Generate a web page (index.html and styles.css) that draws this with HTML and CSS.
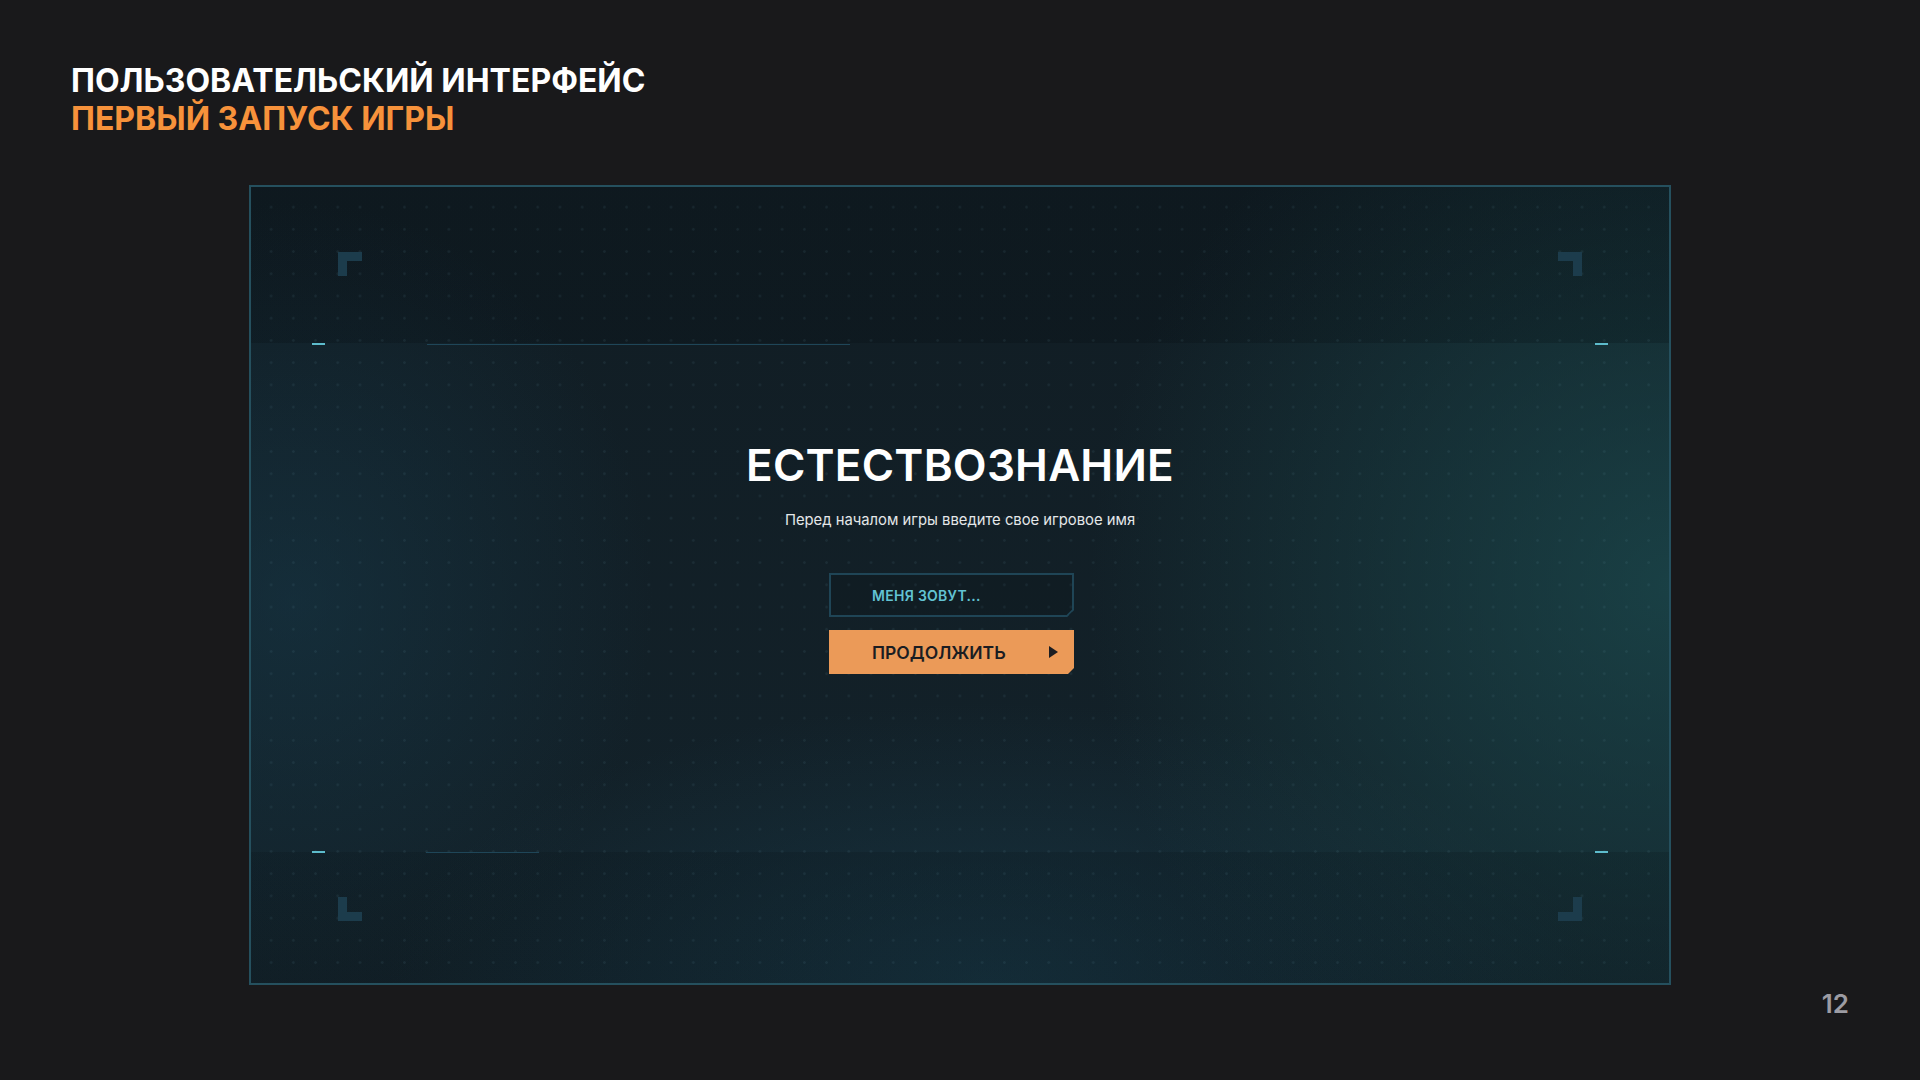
FILE: index.html
```html
<!DOCTYPE html>
<html lang="ru">
    <head>
        <meta charset="utf-8" />
        <title>Пользовательский интерфейс — первый запуск игры</title>
        <link rel="stylesheet" href="styles.css">
    </head>
    <body>
        <header class="deckTitle">
            <div class="deckTitle-main">Пользовательский интерфейс</div>
            <div class="deckTitle-sub">Первый запуск игры</div>
        </header>

        <main class="screen">
            <!-- corner brackets -->
            <span class="bracket tl"></span>
            <span class="bracket tr"></span>
            <span class="bracket bl"></span>
            <span class="bracket br"></span>

            <!-- guide dashes and lines -->
            <span class="dash top left"></span>
            <span class="dash top right"></span>
            <span class="dash bottom left"></span>
            <span class="dash bottom right"></span>
            <span class="guide top"></span>
            <span class="guide bottom"></span>

            <div class="welcome">
                <h1 class="welcome-title">Естествознание</h1>
                <p class="welcome-text">Перед началом игры введите свое игровое имя</p>

                <form class="login">
                    <label class="nameField">
                        <input type="text" class="nameInput" placeholder="Меня зовут..." />
                    </label>
                    <button type="submit" class="continue">
                        <span>Продолжить</span>
                        <svg class="continue-arrow" width="9" height="12" viewBox="0 0 9 12"><path d="M0 0 L9 6 L0 12 Z" fill="#1b1d22"/></svg>
                    </button>
                </form>
            </div>
        </main>

        <footer class="pageNum">12</footer>
    </body>
</html>
```

FILE: styles.css
```css
html, body {
    margin:             0;
    padding:            0;
}

body {
    background:         #19191b;
    color:              #ffffff;
    font-family:        Inter, "Noto Sans", sans-serif;
    width:              1920px;
    height:             1080px;
    overflow:           hidden;
}

/* Slide heading */
.deckTitle {
    padding:            62px 71px 0;
    font-size:          32px;
    font-weight:        700;
    line-height:        38px;
    text-transform:     uppercase;
}

.deckTitle-main {
    color:              #ffffff;
}

.deckTitle-sub {
    color:              #f7923b;
}

/* The game screen mock */
.screen {
    position:           relative;
    box-sizing:         border-box;
    width:              1422px;
    height:             800px;
    margin:             47px 0 0 249px;
    border:             2px solid #25505e;
    background:
        radial-gradient(circle at center, rgba(120, 175, 195, 0.09) 0, rgba(120, 175, 195, 0.09) 1px, transparent 1.6px) 0 0 / 22.22px 22.22px,
        linear-gradient(to bottom, rgba(4, 10, 14, 0.22) 0, rgba(4, 10, 14, 0.22) 156px, transparent 156px, transparent 665px, rgba(4, 10, 14, 0.16) 665px),
        radial-gradient(ellipse 580px 580px at 100% 50%, rgba(28, 76, 80, 0.72), transparent 100%),
        radial-gradient(ellipse 600px 280px at 52% 100%, rgba(26, 66, 84, 0.5), transparent 100%),
        radial-gradient(ellipse 360px 400px at 3% 52%, rgba(24, 62, 80, 0.45), transparent 100%),
        linear-gradient(to bottom, #111d24, #13222a);
    background-position: 9px 9px, 0 0, 0 0, 0 0, 0 0, 0 0;
    background-repeat:  repeat, no-repeat, no-repeat, no-repeat, no-repeat, no-repeat;
}

.bracket {
    position:           absolute;
    width:              24px;
    height:             24px;
    border:             0 solid #1c3c4c;
    box-sizing:         border-box;
}

.bracket.tl { left: 87px;  top: 65px;    border-width: 9px 0 0 9px; }
.bracket.tr { right: 87px; top: 65px;    border-width: 9px 9px 0 0; }
.bracket.bl { left: 87px;  bottom: 62px; border-width: 0 0 9px 9px; }
.bracket.br { right: 87px; bottom: 62px; border-width: 0 9px 9px 0; }

.dash {
    position:           absolute;
    width:              13px;
    height:             2px;
    background:         #5dbccc;
}

.dash.top    { top: 156px; }
.dash.bottom { top: 664px; }
.dash.left   { left: 61px; }
.dash.right  { right: 61px; }

.guide {
    position:           absolute;
    height:             1px;
    background:         #1f4658;
}

.guide.top {
    left:               176px;
    top:                157px;
    width:              423px;
}

.guide.bottom {
    left:               175px;
    top:                665px;
    width:              113px;
}

/* Centered welcome block */
.welcome {
    display:            flex;
    flex-direction:     column;
    align-items:        center;
    padding-top:        252px;
}

.welcome-title {
    margin:             0;
    font-size:          44px;
    font-weight:        600;
    line-height:        53px;
    letter-spacing:     0.005em;
    text-transform:     uppercase;
    color:              #ffffff;
}

.welcome-text {
    margin:             18px 0 0;
    font-size:          14.8px;
    line-height:        20px;
    color:              #e4e7e9;
}

.login {
    display:            flex;
    flex-direction:     column;
    gap:                13px;
    width:              245px;
    margin:             43px 17px 0 0;
}

.nameField {
    position:           relative;
    display:            block;
    box-sizing:         border-box;
    height:             44px;
    border:             2px solid #1f4556;
    background:         rgba(0, 0, 0, 0.08);
    clip-path:          polygon(0 0, 100% 0, 100% calc(100% - 7px), calc(100% - 7px) 100%, 0 100%);
}

.nameField::after {
    content:            "";
    position:           absolute;
    right:              -4px;
    bottom:             1px;
    width:              12px;
    height:             2px;
    background:         #1f4556;
    transform:          rotate(-45deg);
}

.nameInput {
    box-sizing:         border-box;
    width:              100%;
    height:             100%;
    padding:            0 0 0 41px;
    border:             0;
    outline:            none;
    background:         transparent;
    font-family:        Inter, "Noto Sans", sans-serif;
    font-size:          14px;
    font-weight:        600;
    letter-spacing:     0.02em;
    text-transform:     uppercase;
    color:              #62c3d3;
}

.nameInput::placeholder {
    color:              #62c3d3;
    opacity:            1;
}

.continue {
    display:            flex;
    align-items:        center;
    justify-content:    space-between;
    box-sizing:         border-box;
    height:             44px;
    padding:            0 16px 0 43px;
    border:             0;
    background:         #eb9a58;
    font-family:        Inter, "Noto Sans", sans-serif;
    font-size:          17.5px;
    font-weight:        600;
    text-transform:     uppercase;
    color:              #1b1d22;
    clip-path:          polygon(0 0, 100% 0, 100% calc(100% - 6px), calc(100% - 6px) 100%, 0 100%);
    cursor:             pointer;
}

.continue-arrow {
    display:            block;
}

/* Slide number */
.pageNum {
    padding:            3px 71px 0 0;
    text-align:         right;
    font-size:          26px;
    font-weight:        600;
    line-height:        32px;
    color:              #9c9ca3;
}
```
